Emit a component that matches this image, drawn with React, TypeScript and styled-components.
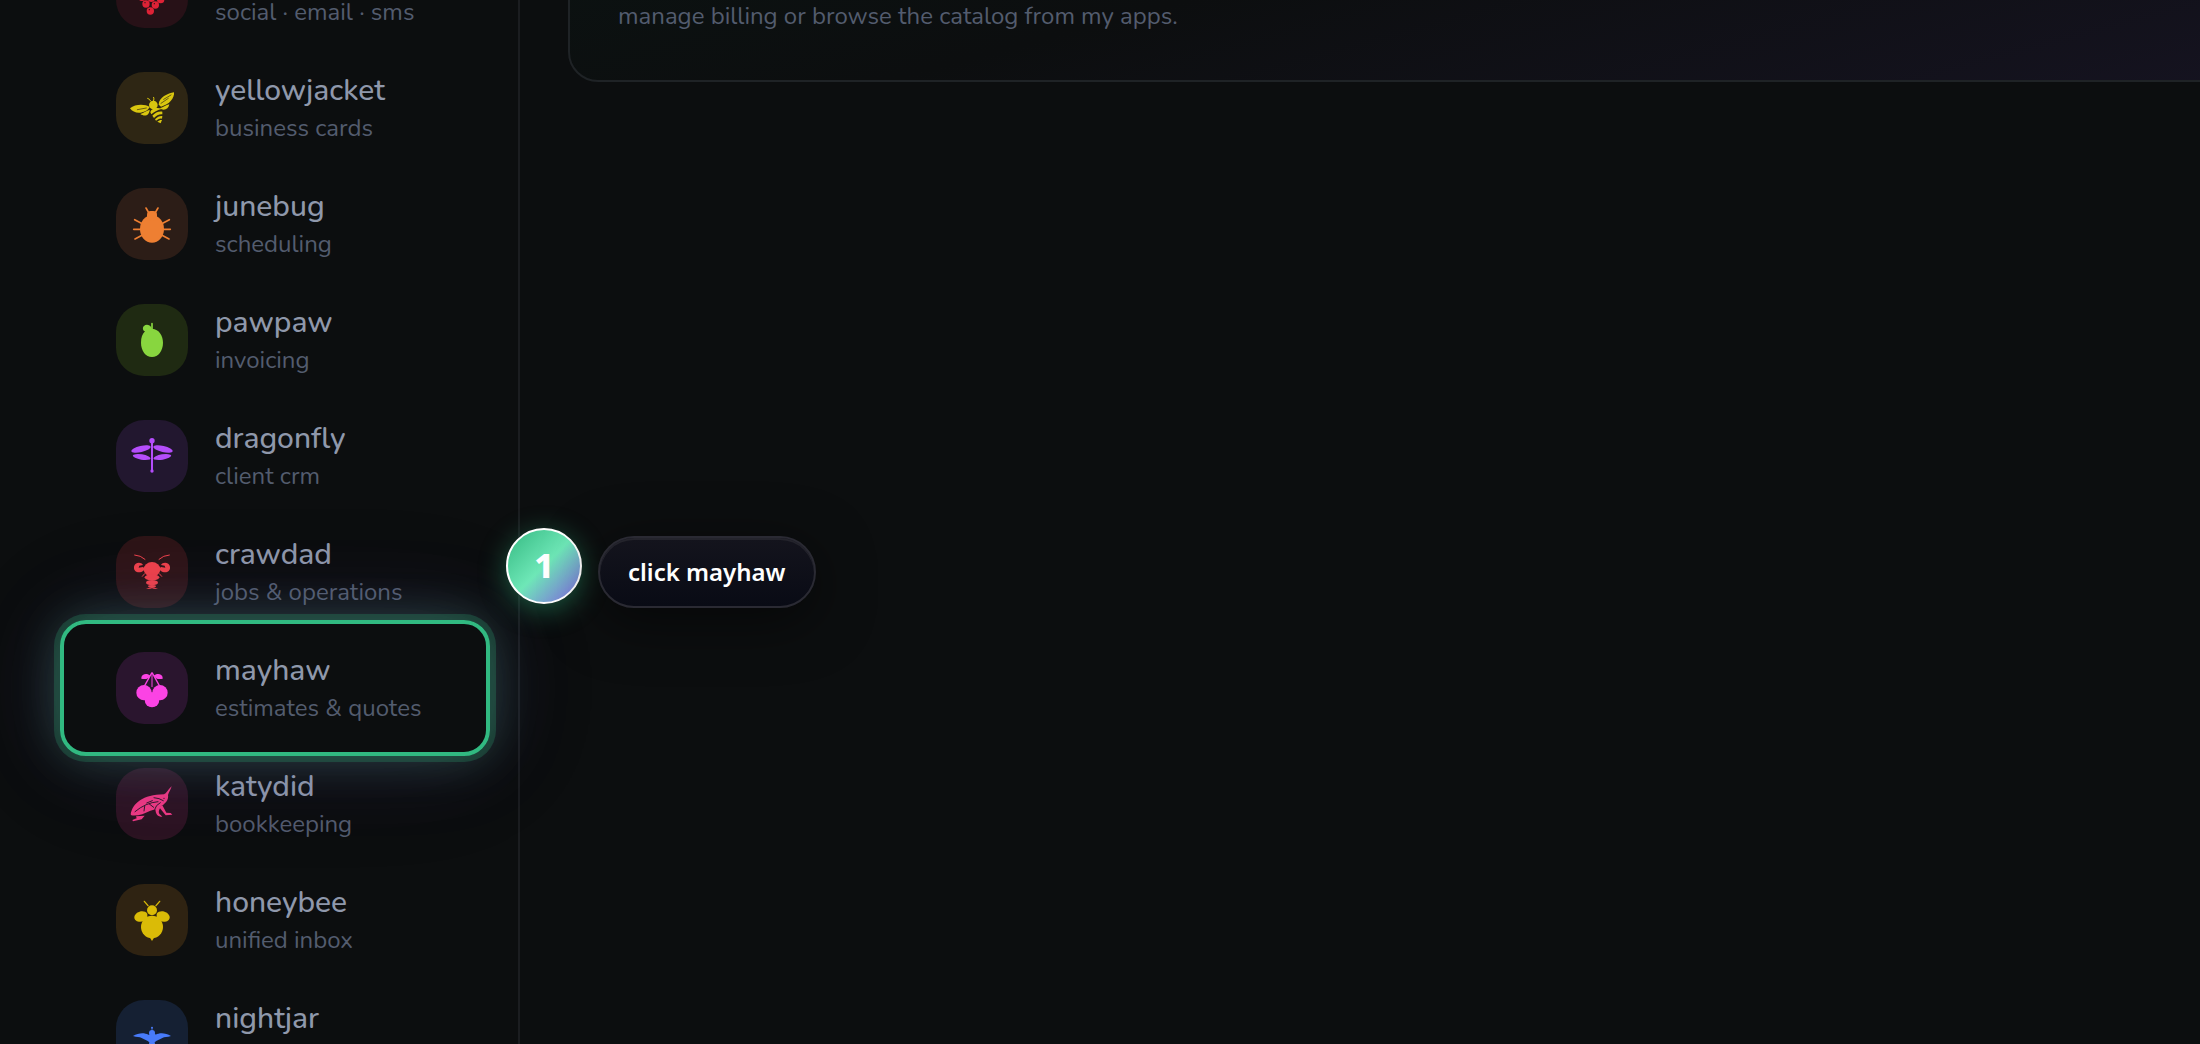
import React from "react";
import styled, { createGlobalStyle } from "styled-components";

const GlobalStyle = createGlobalStyle`
  *, *::before, *::after { box-sizing: border-box; }
  html { background: #0c0e0f; }
  body {
    margin: 0;
    color: #8f98ab;
    font-family: Nunito, Lato, "Open Sans", sans-serif;
  }
`;

const Shell = styled.div`
  display: grid;
  grid-template-columns: 520px minmax(0, 1fr);
  height: 100vh;
  overflow: hidden;
  background: #0c0e0f;
`;

const Sidebar = styled.nav`
  position: relative;
  z-index: 1;
  min-height: 0;
  padding: 0 38px 0 70px;
  border-right: 2px solid #1b1d20;
`;

const AppList = styled.ul`
  margin: -66px 0 0;
  padding: 0;
  list-style: none;
`;

const AppItem = styled.li<{ $target?: boolean }>`
  position: relative;
  z-index: ${(p) => (p.$target ? 1 : 0)};
`;

const AppLink = styled.a`
  display: flex;
  align-items: center;
  gap: 27px;
  height: 116px;
  padding-left: 46px;
  color: inherit;
  text-decoration: none;
`;

const Tile = styled.span<{ $bg: string; $ink: string }>`
  flex: none;
  width: 72px;
  height: 72px;
  border-radius: 28px;
  background: ${(p) => p.$bg};
  color: ${(p) => p.$ink};

  svg {
    display: block;
    width: 100%;
    height: 100%;
  }
`;

const Labels = styled.span`
  display: flex;
  flex-direction: column;
  white-space: nowrap;
`;

const Name = styled.span`
  font-size: 30px;
  font-weight: 500;
  line-height: 40px;
`;

const Role = styled.span`
  color: #535c6e;
  font-size: 24px;
  line-height: 34px;
`;

const Spotlight = styled.div`
  position: absolute;
  inset: -10px;
  border: 4px solid #31b981;
  border-radius: 26px;
  box-shadow:
    0 0 0 6px rgba(49, 185, 129, 0.22),
    0 0 48px rgba(110, 231, 183, 0.24),
    0 0 88px rgba(130, 130, 255, 0.14),
    0 0 130px rgba(80, 20, 80, 0.1);
  pointer-events: none;
`;

const StepBadge = styled.span`
  position: absolute;
  top: -102px;
  left: 436px;
  display: grid;
  place-items: center;
  width: 76px;
  height: 76px;
  padding-bottom: 2px;
  border: 2px solid #fff;
  border-radius: 50%;
  background: linear-gradient(135deg, #34b981 0%, #6ee7b7 50%, #8264e6 100%);
  box-shadow: 0 6px 28px rgba(49, 185, 129, 0.45);
  color: #fff;
  font: 800 34px/40px "Noto Sans", "Open Sans", sans-serif;
`;

const Hint = styled.div`
  position: absolute;
  top: -94px;
  left: 528px;
  padding: 16px 28px;
  border: 2px solid #2a2a33;
  border-radius: 36px;
  background: linear-gradient(180deg, #14141d, #090b15);
  box-shadow: inset 0 2px 0 #24242c, 0 12px 56px rgba(0, 0, 0, 0.5);
  color: #fff;
  font: 600 24px/36px "Noto Sans", "Open Sans", sans-serif;
  white-space: nowrap;
`;

const Main = styled.main`
  min-width: 0;
  padding-left: 48px;
`;

const Card = styled.section`
  display: flex;
  align-items: flex-end;
  height: 282px;
  margin: -200px -48px 0 0;
  padding: 0 48px 46px;
  border: 2px solid #1f2326;
  border-radius: 30px;
  background: linear-gradient(165deg, #0b1513 0%, #0c0e0f 50%, #151320 100%);
`;

const CardText = styled.p`
  margin: 0;
  color: #535c6e;
  font-size: 24px;
  line-height: 36px;
`;

const Mirror = ({ children }: { children: React.ReactNode }) => (
  <>
    {children}
    <g transform="translate(216 0) scale(-1 1)">{children}</g>
  </>
);

const Icon = ({ children }: { children: React.ReactNode }) => (
  <svg viewBox="0 0 216 216" fill="currentColor" stroke="none" strokeLinecap="round" aria-hidden="true">
    {children}
  </svg>
);

const Berries = () => (
  <Icon>
    {[[90, 144], [118, 147], [103, 165], [134, 131], [106, 127], [78, 124]].map(([x, y]) => (
      <g key={`${x}-${y}`}>
        <circle cx={x} cy={y} r="11" />
        <circle cx={x - 3} cy={y - 4} r="2" fill="#271117" />
      </g>
    ))}
  </Icon>
);

const Wasp = () => (
  <Icon>
    <path d="M42 109C58 95 88 96 101 105C92 124 55 130 42 109Z" />
    <path d="M73 126C84 122 91 116 101 113C101 128 88 136 73 126Z" />
    <path d="M128 98C128 76 156 64 174 61C176 78 160 98 135 104Z" />
    <path d="M131 109C140 107 150 99 160 97C158 113 142 117 131 109Z" />
    <circle cx="112" cy="99" r="13" />
    <path d="M103 121C105 110 122 104 137 111C126 112 115 120 106 127Z" />
    <path d="M109 131C117 122 129 117 139 119L139 127C129 126 121 131 114 138Z" />
    <path d="M117 142C124 134 132 131 139 132L138 140C131 138 126 142 120 146Z" />
    <path d="M124 149C130 144 134 143 138 144L134 154Z" />
    <g fill="none" stroke="currentColor" strokeWidth="3">
      <path d="M95 79Q101 80 104 87M113 76Q115 80 113 86" />
    </g>
    <g fill="none" stroke="#2e2614" strokeWidth="2">
      <path d="M64 113L91 108M135 94L157 79M143 82L165 69" />
    </g>
  </Icon>
);

const Beetle = () => (
  <Icon>
    <ellipse cx="108" cy="123" rx="36" ry="41" />
    <rect x="93" y="69" width="30" height="30" rx="11" />
    <g fill="none" stroke="currentColor" strokeWidth="5">
      <Mirror>
        <path d="M90 60L98 74M56 95L76 106M53 124H76M57 153L78 142" />
      </Mirror>
    </g>
  </Icon>
);

const Pawpaw = () => (
  <Icon>
    <path d="M108 74C130 75 141 96 141 116C141 140 127 159 108 159C89 159 75 140 75 116C75 101 79 90 87 82C80 80 79 70 84 66C90 60 102 62 106 71Z" />
    <path d="M108 59V78" fill="none" stroke="currentColor" strokeWidth="5" />
  </Icon>
);

const Dragonfly = () => (
  <Icon>
    <circle cx="108" cy="62" r="8" />
    <rect x="105" y="62" width="6" height="92" />
    <circle cx="108" cy="153" r="5" />
    <Mirror>
      <ellipse cx="75" cy="87" rx="30" ry="9" transform="rotate(-13 75 87)" />
      <ellipse cx="77" cy="111" rx="27" ry="8" transform="rotate(9 77 111)" />
    </Mirror>
  </Icon>
);

const Crawdad = () => (
  <Icon>
    <ellipse cx="108" cy="100" rx="25" ry="22" />
    <ellipse cx="108" cy="124" rx="22" ry="9" />
    <ellipse cx="108" cy="140" rx="18" ry="8" />
    <ellipse cx="108" cy="151" rx="12" ry="4" />
    <Mirror>
      <path d="M81 87C76 76 56 78 54 92C52 108 70 114 82 104L88 99L81 93L68 95L70 89Z" />
      <path d="M108 153Q101 155 90 159Q103 160 108 157Z" />
      <path d="M56 57Q74 58 87 70M86 113L79 121" fill="none" stroke="currentColor" strokeWidth="3" />
    </Mirror>
  </Icon>
);

const Mayhaw = () => (
  <Icon>
    <Mirror>
      <circle cx="84" cy="122" r="23" />
      <path d="M76 77C77 65 94 63 103 71C98 81 88 83 76 80Z" />
      <path d="M107 63L86 101" fill="none" stroke="currentColor" strokeWidth="4" />
    </Mirror>
    <circle cx="108" cy="144" r="22" />
    <path d="M108 119L130 140H86Z" />
    <path d="M108 64V104" fill="none" stroke="currentColor" strokeWidth="3" />
  </Icon>
);

const Katydid = () => (
  <Icon>
    <path d="M44 139C50 106 80 80 144 79C151 77 156 65 167 55C164 66 158 74 156 81C159 96 147 108 133 116C125 123 113 124 103 128C85 137 64 145 46 142Z" />
    <path d="M60 145L86 143L77 154L51 160L49 156L62 151Z" />
    <path d="M118 122C119 139 125 146 139 146L134 141C127 138 127 129 132 121L149 142L169 140L164 135L151 134L139 112Z" />
    <g fill="none" stroke="#30192b" strokeWidth="3">
      <path d="M57 131Q89 104 126 101M92 105L109 98M86 115L84 129M100 108L113 118M133 104Q119 111 116 124M114 89Q130 90 142 98" />
    </g>
    <circle cx="144" cy="91" r="2" fill="#30192b" />
  </Icon>
);

const Honeybee = () => (
  <Icon>
    <ellipse cx="108" cy="129" rx="33" ry="34" />
    <circle cx="108" cy="79" r="15" />
    <path d="M101 160L108 171L115 160Z" />
    <Mirror>
      <path d="M94 89C84 75 57 83 55 99C54 117 84 118 94 103Z" />
      <path d="M85 52L96 65" fill="none" stroke="currentColor" strokeWidth="4" />
    </Mirror>
  </Icon>
);

const Nightjar = () => (
  <Icon>
    <circle cx="108" cy="83" r="3" />
    <circle cx="108" cy="99" r="9" />
    <path d="M107 83H109V94H107Z" />
    <path d="M99 104C117 100 117 101 119 104C131 97 149 98 165 108C154 112 145 110 139 114C132 119 121 121 116 127L122 157L108 150L94 157L100 127C95 121 84 119 77 114C71 110 62 112 51 108C67 98 85 97 97 104Z" />
  </Icon>
);

interface AppEntry {
  name: string;
  role: string;
  bg: string;
  ink: string;
  icon: React.ReactNode;
}

const apps: AppEntry[] = [
  { name: "mulberry", role: "social · email · sms", bg: "#271117", ink: "#de2236", icon: <Berries /> },
  { name: "yellowjacket", role: "business cards", bg: "#2e2614", ink: "#d9c60f", icon: <Wasp /> },
  { name: "junebug", role: "scheduling", bg: "#2c1d17", ink: "#ee7f32", icon: <Beetle /> },
  { name: "pawpaw", role: "invoicing", bg: "#1f2a12", ink: "#88d63f", icon: <Pawpaw /> },
  { name: "dragonfly", role: "client crm", bg: "#22172f", ink: "#b44dfb", icon: <Dragonfly /> },
  { name: "crawdad", role: "jobs & operations", bg: "#2e1517", ink: "#f0424b", icon: <Crawdad /> },
  { name: "mayhaw", role: "estimates & quotes", bg: "#2a152e", ink: "#fb43e4", icon: <Mayhaw /> },
  { name: "katydid", role: "bookkeeping", bg: "#2c1422", ink: "#ee3984", icon: <Katydid /> },
  { name: "honeybee", role: "unified inbox", bg: "#2f2312", ink: "#dabb07", icon: <Honeybee /> },
  { name: "nightjar", role: "after hours", bg: "#152033", ink: "#487bfa", icon: <Nightjar /> },
];

export default function App() {
  const target = "mayhaw";
  return (
    <>
      <GlobalStyle />
      <Shell>
        <Sidebar aria-label="Apps">
          <AppList>
            {apps.map((app) => (
              <AppItem key={app.name} $target={app.name === target}>
                <AppLink href={`#${app.name}`}>
                  <Tile $bg={app.bg} $ink={app.ink}>{app.icon}</Tile>
                  <Labels>
                    <Name>{app.name}</Name>
                    <Role>{app.role}</Role>
                  </Labels>
                </AppLink>
                {app.name === target && (
                  <>
                    <Spotlight />
                    <StepBadge>1</StepBadge>
                    <Hint role="tooltip">click mayhaw</Hint>
                  </>
                )}
              </AppItem>
            ))}
          </AppList>
        </Sidebar>
        <Main>
          <Card>
            <CardText>manage billing or browse the catalog from my apps.</CardText>
          </Card>
        </Main>
      </Shell>
    </>
  );
}
